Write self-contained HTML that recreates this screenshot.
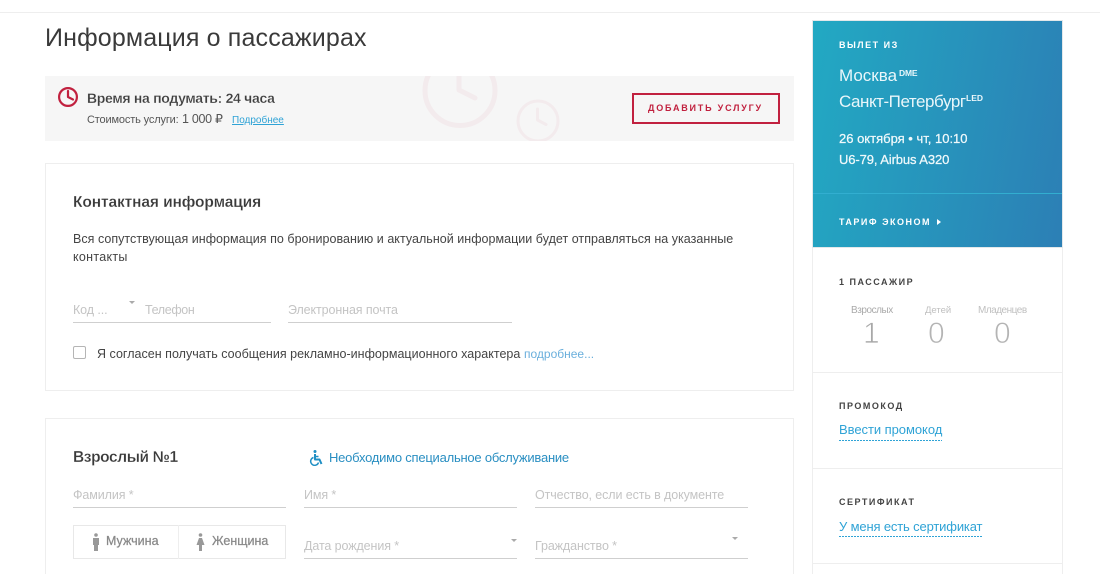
<!DOCTYPE html>
<html lang="ru"><head><meta charset="utf-8"><title>Информация о пассажирах</title>
<style>
html,body{margin:0;padding:0;background:#fff;width:1100px;height:574px;overflow:hidden}
#w{width:1100px;height:574px;overflow:hidden;position:relative;font-family:"Liberation Sans","DejaVu Sans",sans-serif;color:#3a3a3a}
.a,.t{position:absolute}
.t{white-space:nowrap;line-height:1}
.ln{position:absolute;height:1px;background:#cfcfcf}
.ph{color:#c4c4c4;font-size:12.500px;letter-spacing:-.1px}
.cap{font-weight:bold;font-size:9px;letter-spacing:1.500px}
.box{position:absolute;border:1px solid #eeeeee;box-sizing:border-box;background:#fff}
.tri{position:absolute;width:0;height:0;border-left:3px solid transparent;border-right:3px solid transparent;border-top:3px solid #aaa}
.blue{color:#2fa3d6}
.med{-webkit-text-stroke:.25px currentColor}
.dash{background:repeating-linear-gradient(90deg,#2fa3d6 0 2px,transparent 2px 3px) left bottom/100% 1px no-repeat}
.dig{font-size:30px;color:#b4b4b4;-webkit-text-stroke:.8px #fff}
</style></head><body><div id="w">
<div class="a" style="left:0;top:12px;width:1100px;height:1px;background:#eeeeee"></div>

<div class="t" style="left:45px;top:26px;font-size:25px;color:#3a3a3a;letter-spacing:.15px">Информация о пассажирах</div>

<!-- banner -->
<div class="a" style="left:45px;top:76px;width:749px;height:65px;background:#f6f6f6;overflow:hidden">
<svg class="a" style="left:0;top:0" width="749" height="65" fill="none" stroke="#f3ebed">
<circle cx="415" cy="14.500" r="35" stroke-width="5"/><path d="M414 -5V14L430 22" stroke-width="5" stroke-linecap="round" stroke-linejoin="round"/>
<circle cx="493" cy="45" r="20" stroke-width="3"/><path d="M492.500 33V44L501 48.500" stroke-width="3" stroke-linecap="round" stroke-linejoin="round"/>
</svg>
</div>
<svg class="a" style="left:58px;top:87px" width="20" height="20" fill="none" stroke="#c1213f" stroke-width="2.200"><circle cx="10" cy="10" r="8.900"/><path d="M10 4V10L15 12.500" stroke-linecap="round" stroke-linejoin="round"/></svg>
<div class="t" style="left:87px;top:91px;font-size:14px;font-weight:bold;color:#3f3f3f;letter-spacing:-.3px;-webkit-text-stroke:.2px #f6f6f6">Время на подумать: 24 часа</div>
<div class="t" style="left:87px;top:115px;font-size:11px;color:#555;letter-spacing:-.15px">Стоимость услуги:</div>
<div class="t" style="left:182px;top:113px;font-size:12.500px;color:#555;letter-spacing:-.3px">1 000 ₽</div>
<div class="t blue" style="left:232px;top:116px;font-size:10px;text-decoration:underline">Подробнее</div>
<div class="a" style="left:632px;top:93px;width:148px;height:31px;box-sizing:border-box;border:2px solid #c1213f"></div>
<div class="t" style="left:648px;top:104px;font-size:9px;font-weight:bold;color:#c1213f;letter-spacing:1.800px">ДОБАВИТЬ УСЛУГУ</div>

<!-- contact card -->
<div class="box" style="left:45px;top:163px;width:749px;height:228px"></div>
<div class="t" style="left:73px;top:195px;font-size:15.500px;font-weight:bold;color:#3a3a3a;letter-spacing:-.1px;-webkit-text-stroke:.2px #fff">Контактная информация</div>
<div class="t" style="left:73px;top:233px;font-size:12.500px;color:#444;letter-spacing:.03px">Вся сопутствующая информация по бронированию и актуальной информации будет отправляться на указанные</div>
<div class="t" style="left:73px;top:251px;font-size:12.500px;color:#444;letter-spacing:.3px">контакты</div>
<div class="t ph" style="left:73px;top:304px">Код ...</div>
<div class="tri" style="left:129px;top:301px"></div>
<div class="t ph" style="left:145px;top:304px;letter-spacing:-.35px">Телефон</div>
<div class="ln" style="left:73px;top:322px;width:198px"></div>
<div class="t ph" style="left:288px;top:304px">Электронная почта</div>
<div class="ln" style="left:288px;top:322px;width:224px"></div>
<div class="a" style="left:73px;top:346px;width:13px;height:13px;box-sizing:border-box;border:1px solid #b5b5b5;border-radius:2px"></div>
<div class="t" style="left:97px;top:348px;font-size:12.500px;color:#444;letter-spacing:.02px">Я согласен получать сообщения рекламно-информационного характера</div>
<div class="t" style="left:524px;top:348px;font-size:12px;color:#6aafdc">подробнее...</div>

<!-- adult card -->
<div class="box" style="left:45px;top:418px;width:749px;height:170px"></div>
<div class="t" style="left:73px;top:450px;font-size:15.500px;font-weight:bold;color:#3a3a3a;letter-spacing:-.4px;-webkit-text-stroke:.2px #fff">Взрослый №1</div>
<svg class="a" style="left:309px;top:450px" width="14" height="16" viewBox="0 0 14 16" fill="none" stroke="#1f8fc4"><circle cx="6" cy="1.500" r="1.500" fill="#1f8fc4" stroke="none"/><path d="M6 4V9.500H10.500L12.500 14" stroke-width="2" stroke-linejoin="round"/><path d="M6 6.500H9.500" stroke-width="1.500"/><path d="M4.500 7.500A4 4 0 1 0 9.500 12.500" stroke-width="1.500"/></svg>
<div class="t" style="left:329px;top:451px;font-size:13px;color:#2a8fc2;letter-spacing:-.23px">Необходимо специальное обслуживание</div>

<div class="t ph" style="left:73px;top:489px">Фамилия *</div>
<div class="ln" style="left:73px;top:507px;width:213px"></div>
<div class="t ph" style="left:304px;top:489px">Имя *</div>
<div class="ln" style="left:304px;top:507px;width:213px"></div>
<div class="t ph" style="left:535px;top:489px">Отчество, если есть в документе</div>
<div class="ln" style="left:535px;top:507px;width:213px"></div>

<div class="box" style="left:73px;top:525px;width:213px;height:34px;border-color:#e8e8e8"></div>
<div class="a" style="left:178px;top:525px;width:1px;height:34px;background:#eee"></div>
<svg class="a" style="left:92px;top:533px" width="8" height="18" fill="#999"><circle cx="4" cy="2" r="1.800"/><path d="M1 5H7V12H6V18H2V12H1Z"/></svg>
<div class="t med" style="left:106px;top:535px;font-size:12.500px;color:#888">Мужчина</div>
<svg class="a" style="left:196px;top:533px" width="9" height="18" fill="#999"><circle cx="4.500" cy="2" r="1.800"/><path d="M3 5H6L8.500 12H6V18H3V12H.5Z"/></svg>
<div class="t med" style="left:212px;top:535px;font-size:12.500px;color:#888">Женщина</div>

<div class="t ph" style="left:304px;top:540px">Дата рождения *</div>
<div class="tri" style="left:511px;top:539px"></div>
<div class="ln" style="left:304px;top:558px;width:213px"></div>
<div class="t ph" style="left:535px;top:540px">Гражданство *</div>
<div class="tri" style="left:732px;top:537px"></div>
<div class="ln" style="left:535px;top:558px;width:213px"></div>

<!-- sidebar -->
<div class="a" style="left:812px;top:20px;width:251px;height:228px;box-sizing:border-box;border:1px solid #e3e8ea;background:linear-gradient(100deg,#22a9c3 0%,#2c7fb5 100%)"></div>
<div class="a" style="left:813px;top:193px;width:249px;height:1px;background:#32aed0"></div>
<div class="t cap" style="left:839px;top:41px;color:#fff">ВЫЛЕТ ИЗ</div>
<div class="t" style="left:839px;top:67px;font-size:17px;color:#e9f6fa">Москва</div>
<div class="t" style="left:899px;top:69px;font-size:8.500px;font-weight:bold;color:#e9f6fa;letter-spacing:-.2px">DME</div>
<div class="t" style="left:839px;top:93px;font-size:17px;color:#e9f6fa;letter-spacing:-.45px">Санкт-Петербург</div>
<div class="t" style="left:966px;top:94px;font-size:8.500px;font-weight:bold;color:#e9f6fa">LED</div>
<div class="t med" style="left:839px;top:132px;font-size:13px;color:#f0f9fb">26 октября • чт, 10:10</div>
<div class="t med" style="left:839px;top:153px;font-size:13px;color:#f0f9fb;letter-spacing:-.1px">U6-79, Airbus A320</div>
<div class="t cap" style="left:839px;top:218px;color:#fff">ТАРИФ ЭКОНОМ</div>
<div class="a" style="left:937px;top:219px;width:0;height:0;border-top:3px solid transparent;border-bottom:3px solid transparent;border-left:4px solid #fff"></div>

<div class="a" style="left:812px;top:248px;width:1px;height:326px;background:#eee"></div>
<div class="a" style="left:1062px;top:248px;width:1px;height:326px;background:#eee"></div>
<div class="a" style="left:812px;top:372px;width:251px;height:1px;background:#eee"></div>
<div class="a" style="left:812px;top:468px;width:251px;height:1px;background:#eee"></div>
<div class="a" style="left:812px;top:563px;width:251px;height:1px;background:#eee"></div>

<div class="t cap" style="left:839px;top:278px;color:#444">1 ПАССАЖИР</div>
<div class="t" style="left:851px;top:306px;font-size:10px;color:#aaa;letter-spacing:-.45px">Взрослых</div>
<div class="t" style="left:925px;top:306px;font-size:9.500px;color:#c0c0c0">Детей</div>
<div class="t" style="left:978px;top:306px;font-size:10px;color:#c0c0c0;letter-spacing:-.5px">Младенцев</div>
<div class="t dig" style="left:863px;top:319px;color:#a8a8a8">1</div>
<div class="t dig" style="left:928px;top:319px">0</div>
<div class="t dig" style="left:994px;top:319px">0</div>

<div class="t cap" style="left:839px;top:402px;color:#444">ПРОМОКОД</div>
<div class="t blue dash" style="left:839px;top:423px;font-size:13px;padding-bottom:5px;letter-spacing:-.05px">Ввести промокод</div>
<div class="t cap" style="left:839px;top:498px;color:#444">СЕРТИФИКАТ</div>
<div class="t blue dash" style="left:839px;top:520px;font-size:13px;padding-bottom:4px;letter-spacing:-.15px">У меня есть сертификат</div>
</div></body></html>
